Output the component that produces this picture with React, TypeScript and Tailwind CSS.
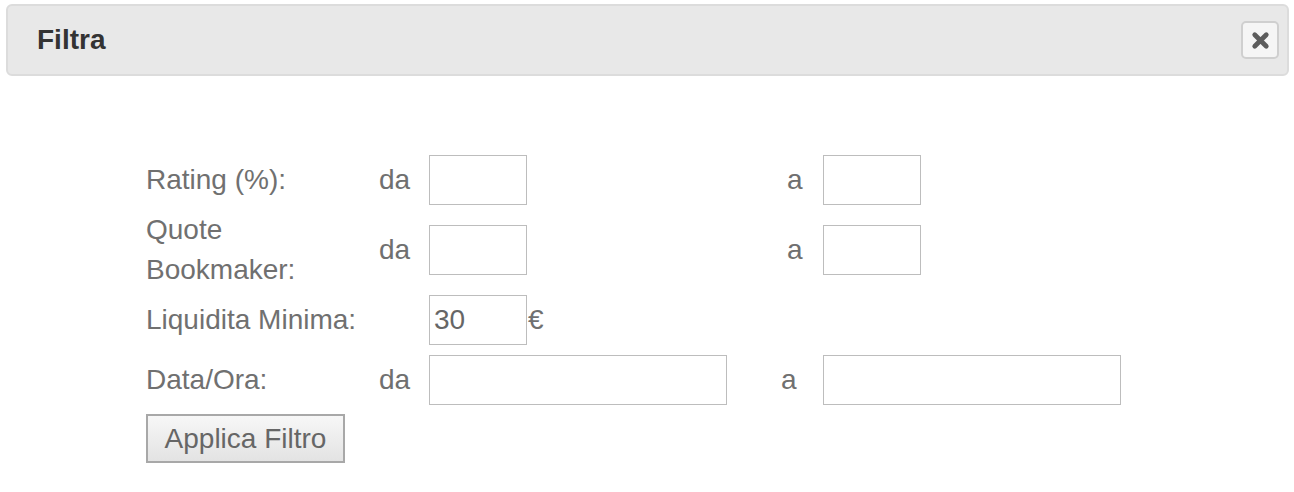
export default function App() {
    const inputCls = "h-[50px] border border-[#bdbdbd] bg-white px-[4px] text-[28px] text-[#666] outline-none";

    return (
        <div className="w-[1294px] h-[492px] bg-white pt-[4px] px-[6px] font-['Liberation_Sans',Arial,sans-serif]">
            <div className="h-[72px] w-[1283px] rounded-[6px] border-2 border-[#dcdcdc] bg-[#e8e8e8] flex items-center justify-between pl-[29px] pr-[8px]">
                <h3 className="text-[28px] font-bold text-[#333] leading-none">Filtra</h3>
                <button className="w-[38px] h-[38px] rounded-[5px] border-2 border-[#cfcfcf] bg-[#f5f5f5] flex items-center justify-center">
                    <svg viewBox="0 0 20 20" className="w-[21px] h-[21px]">
                        <path d="M4.5 4.5L15.5 15.5M15.5 4.5L4.5 15.5" stroke="#5c5c5c" strokeWidth={4.5} strokeLinecap="round" />
                    </svg>
                </button>
            </div>

            <div className="pl-[140px] pt-[74px] text-[28px] text-[#707070] leading-[40px]">
                <div className="grid grid-cols-[233px_50px_350px_44px_auto] items-center">
                    {/* Rating */}
                    <div className="h-[60px] flex items-center">Rating (%):</div>
                    <div>da</div>
                    <div><input className={`${inputCls} w-[98px]`} /></div>
                    <div className="pl-[8px]">a</div>
                    <div><input className={`${inputCls} w-[98px]`} /></div>

                    {/* Quote */}
                    <div className="h-[80px] flex items-center">Quote<br />Bookmaker:</div>
                    <div>da</div>
                    <div><input className={`${inputCls} w-[98px]`} /></div>
                    <div className="pl-[8px]">a</div>
                    <div><input className={`${inputCls} w-[98px]`} /></div>

                    {/* Liquidita */}
                    <div className="h-[60px] flex items-center">Liquidita Minima:</div>
                    <div></div>
                    <div className="flex items-center">
                        <input className={`${inputCls} w-[98px]`} defaultValue="30" />
                        <span className="pl-[1px]">€</span>
                    </div>
                    <div></div>
                    <div></div>

                    {/* Data/Ora */}
                    <div className="h-[60px] flex items-center">Data/Ora:</div>
                    <div>da</div>
                    <div><input className={`${inputCls} w-[298px]`} /></div>
                    <div className="pl-[2px]">a</div>
                    <div><input className={`${inputCls} w-[298px]`} /></div>
                </div>

                <button className="mt-[4px] w-[199px] h-[49px] border-2 border-[#a8a8a8] bg-gradient-to-b from-[#f7f7f7] to-[#e3e3e3] text-[28px] text-[#666] leading-none">
                    Applica Filtro
                </button>
            </div>
        </div>
    );
}
